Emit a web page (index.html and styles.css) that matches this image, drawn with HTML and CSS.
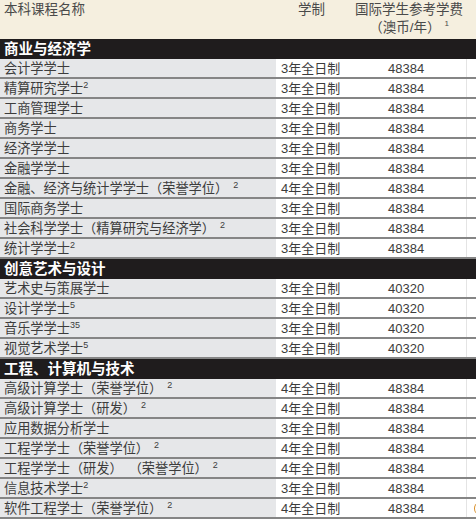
FILE: index.html
```html
<!DOCTYPE html>
<html lang="zh">
<head>
<meta charset="utf-8">
<link rel="stylesheet" href="styles.css">
</head>
<body>
<div class="table">
  <div class="head">
    <div class="h-name">本科课程名称</div>
    <div class="h-dur">学制</div>
    <div class="h-fee">国际学生参考学费<br>（澳币/年）<sup>1</sup></div>
  </div>

  <div class="section">商业与经济学</div>
  <div class="row"><div class="c-name">会计学学士</div><div class="c-dur">3年全日制</div><div class="c-fee">48384</div><div class="c-end"></div></div>
  <div class="row"><div class="c-name">精算研究学士<sup>2</sup></div><div class="c-dur">3年全日制</div><div class="c-fee">48384</div><div class="c-end"></div></div>
  <div class="row"><div class="c-name">工商管理学士</div><div class="c-dur">3年全日制</div><div class="c-fee">48384</div><div class="c-end"></div></div>
  <div class="row"><div class="c-name">商务学士</div><div class="c-dur">3年全日制</div><div class="c-fee">48384</div><div class="c-end"></div></div>
  <div class="row"><div class="c-name">经济学学士</div><div class="c-dur">3年全日制</div><div class="c-fee">48384</div><div class="c-end"></div></div>
  <div class="row"><div class="c-name">金融学学士</div><div class="c-dur">3年全日制</div><div class="c-fee">48384</div><div class="c-end"></div></div>
  <div class="row"><div class="c-name">金融、经济与统计学学士（荣誉学位）<sup class="gap">2</sup></div><div class="c-dur">4年全日制</div><div class="c-fee">48384</div><div class="c-end"></div></div>
  <div class="row"><div class="c-name">国际商务学士</div><div class="c-dur">3年全日制</div><div class="c-fee">48384</div><div class="c-end"></div></div>
  <div class="row"><div class="c-name">社会科学学士（精算研究与经济学）<sup class="gap">2</sup></div><div class="c-dur">3年全日制</div><div class="c-fee">48384</div><div class="c-end"></div></div>
  <div class="row"><div class="c-name">统计学学士<sup>2</sup></div><div class="c-dur">3年全日制</div><div class="c-fee">48384</div><div class="c-end"></div></div>

  <div class="section">创意艺术与设计</div>
  <div class="row"><div class="c-name">艺术史与策展学士</div><div class="c-dur">3年全日制</div><div class="c-fee">40320</div><div class="c-end"></div></div>
  <div class="row"><div class="c-name">设计学学士<sup>5</sup></div><div class="c-dur">3年全日制</div><div class="c-fee">40320</div><div class="c-end"></div></div>
  <div class="row"><div class="c-name">音乐学学士<sup>35</sup></div><div class="c-dur">3年全日制</div><div class="c-fee">40320</div><div class="c-end"></div></div>
  <div class="row"><div class="c-name">视觉艺术学士<sup>5</sup></div><div class="c-dur">3年全日制</div><div class="c-fee">40320</div><div class="c-end"></div></div>

  <div class="section">工程、计算机与技术</div>
  <div class="row"><div class="c-name">高级计算学士（荣誉学位）<sup class="gap">2</sup></div><div class="c-dur">4年全日制</div><div class="c-fee">48384</div><div class="c-end"></div></div>
  <div class="row"><div class="c-name">高级计算学士（研发）<sup class="gap">2</sup></div><div class="c-dur">4年全日制</div><div class="c-fee">48384</div><div class="c-end"></div></div>
  <div class="row"><div class="c-name">应用数据分析学士</div><div class="c-dur">3年全日制</div><div class="c-fee">48384</div><div class="c-end"></div></div>
  <div class="row"><div class="c-name">工程学学士（荣誉学位）<sup class="gap">2</sup></div><div class="c-dur">4年全日制</div><div class="c-fee">48384</div><div class="c-end"></div></div>
  <div class="row"><div class="c-name">工程学学士（研发）<span class="pgap"></span>（荣誉学位）<sup class="gap">2</sup></div><div class="c-dur">4年全日制</div><div class="c-fee">48384</div><div class="c-end"></div></div>
  <div class="row"><div class="c-name">信息技术学士<sup>2</sup></div><div class="c-dur">3年全日制</div><div class="c-fee">48384</div><div class="c-end"></div></div>
  <div class="row"><div class="c-name">软件工程学士（荣誉学位）<sup class="gap">2</sup></div><div class="c-dur">4年全日制</div><div class="c-fee">48384</div><div class="c-end"><span class="edge"></span></div></div>
</div>
</body>
</html>
```

FILE: styles.css
```css
html, body {
  margin: 0;
  padding: 0;
  background: #ffffff;
}

.table {
  width: 476px;
  font-family: "Liberation Sans", "Noto Sans CJK SC", sans-serif;
  font-size: 13px;
  color: #3c3c3c;
  overflow: hidden;
}

.head {
  display: grid;
  grid-template-columns: 276px 64px 136px;
  height: 39px;
  background: #f5efdf;
  color: #4a4a4a;
  line-height: 18px;
  box-sizing: border-box;
  padding-top: 1px;
  font-size: 13.5px;
}

.h-name {
  padding-left: 4px;
}

.h-dur {
  padding-left: 22px;
}

.h-fee {
  text-align: center;
  padding-left: 2px;
}

.h-fee sup {
  font-size: 8px;
  vertical-align: 6px;
  line-height: 0;
  margin-left: 4px;
}

.section {
  height: 20px;
  line-height: 20px;
  background: #1f1c1d;
  color: #ffffff;
  font-weight: bold;
  font-size: 14.5px;
  padding-left: 4px;
}

.row {
  display: grid;
  grid-template-columns: 276px 107px 83px 10px;
  grid-template-rows: 18px;
  height: 20px;
  box-sizing: border-box;
  border-bottom: 2px solid #858585;
  line-height: 19px;
}

.c-name {
  background: #e6e7e9;
  padding-left: 4px;
  white-space: nowrap;
  font-size: 13.2px;
}

.c-name sup {
  font-size: 9px;
  vertical-align: 5px;
  line-height: 0;
}

.c-name sup.gap {
  margin-left: 5px;
}

.pgap {
  display: inline-block;
  width: 6px;
}

.c-dur {
  padding-left: 5px;
}

.c-fee {
  padding-left: 5px;
}

.c-end {
  border-left: 1px solid #e4e4e4;
  overflow: hidden;
  position: relative;
}

.edge {
  position: absolute;
  left: 7px;
  top: 4px;
  width: 8px;
  height: 11px;
  border-left: 1.5px solid #d9902b;
  border-radius: 50%;
}
```
